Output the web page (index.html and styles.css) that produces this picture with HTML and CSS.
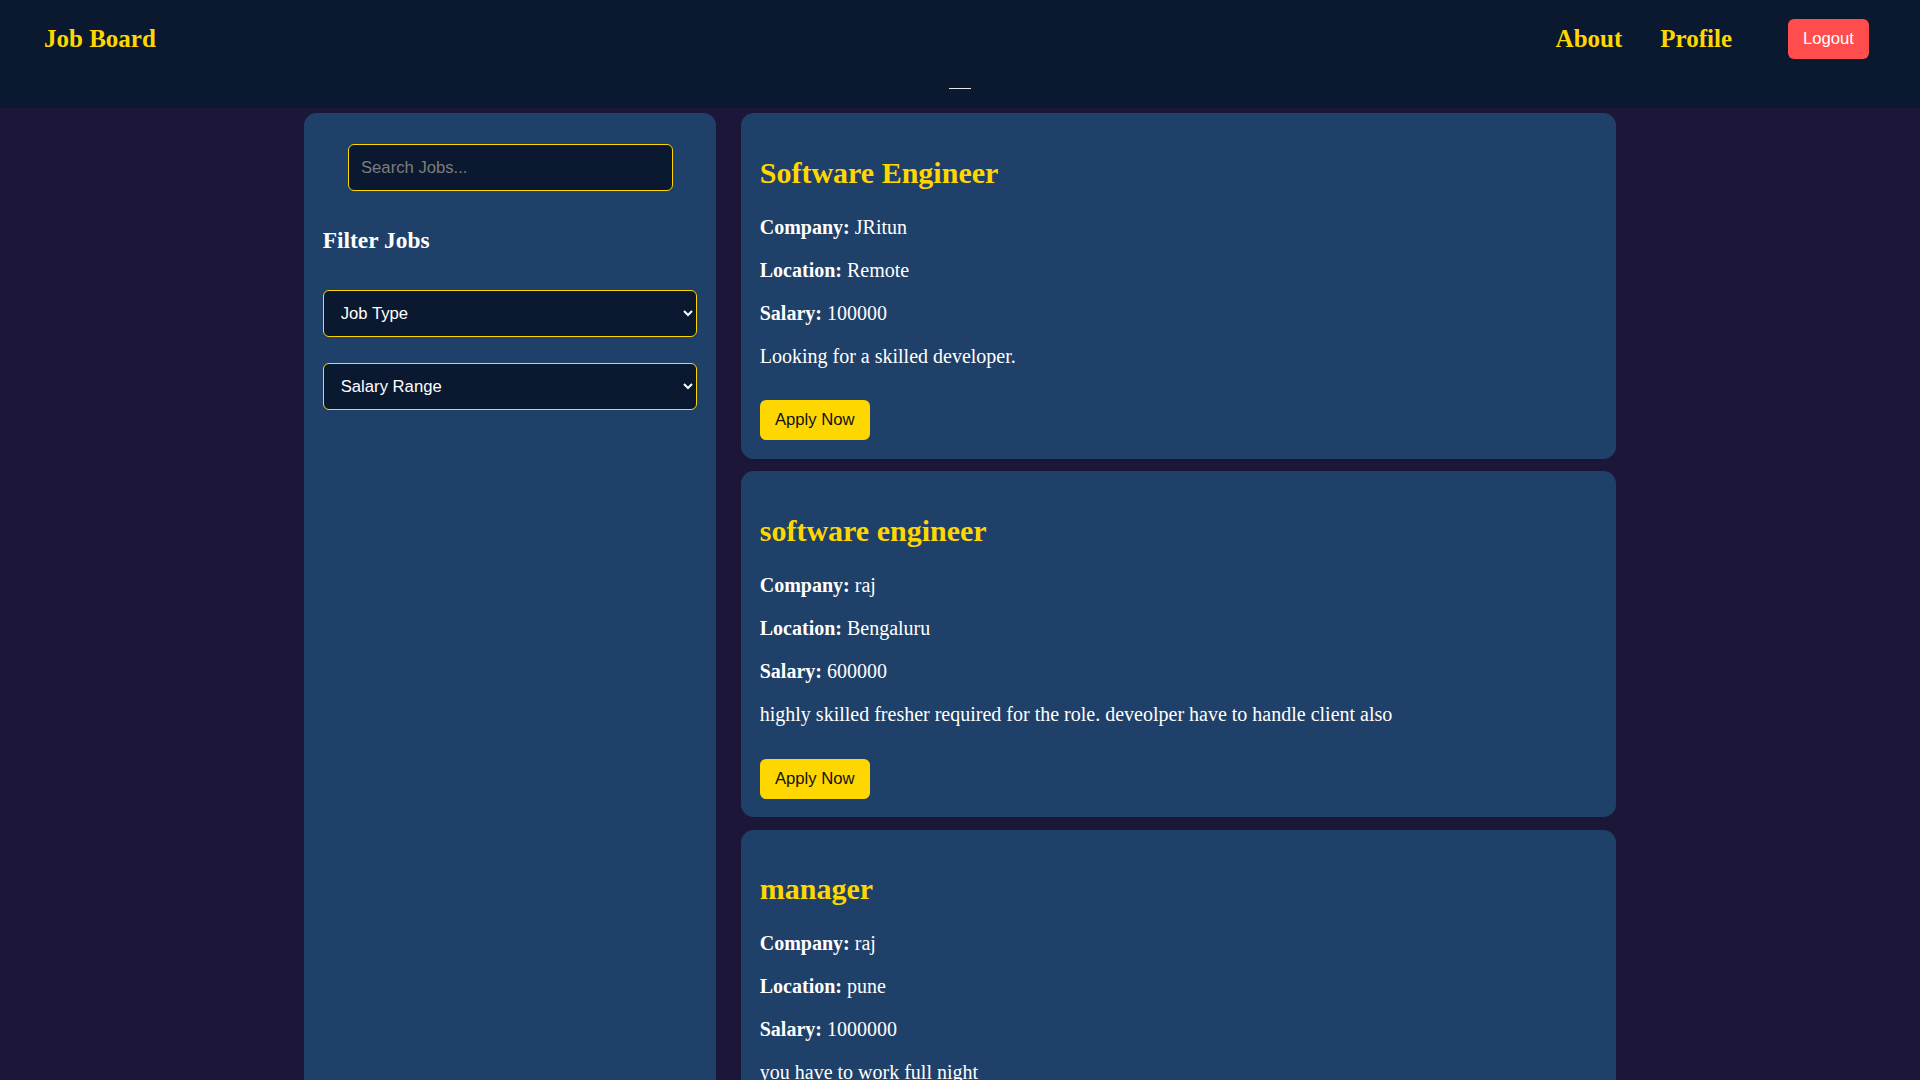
FILE: index.html
```html
<!DOCTYPE html>
<html lang="en">
<head>
<meta charset="utf-8">
<title>Job Board</title>
<link rel="stylesheet" href="styles.css">
</head>
<body>
<header class="site-header">
  <div class="header-row">
    <div class="logo">Job Board</div>
    <nav class="nav">
      <a class="nav-link" href="#">About</a>
      <a class="nav-link nav-link-last" href="#">Profile</a>
      <button class="logout-btn" type="button">Logout</button>
    </nav>
  </div>
  <div class="menu-line"></div>
</header>

<main class="layout">
  <aside class="sidebar">
    <input class="search-input" type="text" placeholder="Search Jobs...">
    <h3 class="filter-title">Filter Jobs</h3>
    <select class="filter-select">
      <option>Job Type</option>
      <option>Full-time</option>
      <option>Part-time</option>
      <option>Remote</option>
    </select>
    <select class="filter-select filter-select-second">
      <option>Salary Range</option>
      <option>0 - 500000</option>
      <option>500000 - 1000000</option>
      <option>1000000+</option>
    </select>
  </aside>

  <section class="job-list">
    <article class="job-card">
      <h2 class="job-title">Software Engineer</h2>
      <p class="job-line"><strong>Company:</strong> JRitun</p>
      <p class="job-line"><strong>Location:</strong> Remote</p>
      <p class="job-line"><strong>Salary:</strong> 100000</p>
      <p class="job-line">Looking for a skilled developer.</p>
      <div class="card-actions"><button class="apply-btn" type="button">Apply Now</button></div>
    </article>

    <article class="job-card">
      <h2 class="job-title">software engineer</h2>
      <p class="job-line"><strong>Company:</strong> raj</p>
      <p class="job-line"><strong>Location:</strong> Bengaluru</p>
      <p class="job-line"><strong>Salary:</strong> 600000</p>
      <p class="job-line">highly skilled fresher required for the role. deveolper have to handle client also</p>
      <div class="card-actions"><button class="apply-btn" type="button">Apply Now</button></div>
    </article>

    <article class="job-card">
      <h2 class="job-title">manager</h2>
      <p class="job-line"><strong>Company:</strong> raj</p>
      <p class="job-line"><strong>Location:</strong> pune</p>
      <p class="job-line"><strong>Salary:</strong> 1000000</p>
      <p class="job-line">you have to work full night</p>
      <div class="card-actions"><button class="apply-btn" type="button">Apply Now</button></div>
    </article>
  </section>
</main>
</body>
</html>
```

FILE: styles.css
```css
* {
  box-sizing: border-box;
}

html, body {
  margin: 0;
  padding: 0;
}

body {
  background: #1c1638;
  color: #ffffff;
  font-family: "Liberation Serif", "Times New Roman", serif;
  font-size: 20px;
}

.site-header {
  background: #0a192f;
  height: 108px;
  padding: 19px 51px 0 44px;
  display: flex;
  flex-direction: column;
}

.header-row {
  display: flex;
  align-items: center;
  justify-content: space-between;
  height: 40px;
}

.logo {
  color: #ffd700;
  font-weight: bold;
  font-size: 25px;
}

.nav {
  display: flex;
  align-items: center;
}

.nav-link {
  color: #ffd700;
  font-weight: bold;
  font-size: 25px;
  text-decoration: none;
  margin-left: 38px;
}

.nav-link-last {
  margin-right: 56px;
}

.logout-btn {
  background: #ff4d4d;
  color: #ffffff;
  border: none;
  border-radius: 6px;
  font-family: "Liberation Sans", Arial, sans-serif;
  font-size: 16.67px;
  height: 40px;
  width: 81px;
  padding: 0;
}

.menu-line {
  align-self: center;
  width: 22px;
  height: 1px;
  background: #e8e8e8;
  margin-top: 29px;
  margin-left: 7px;
}

.layout {
  width: 1312px;
  margin: 5px auto 0;
  display: flex;
  gap: 25px;
  align-items: stretch;
}

.sidebar {
  width: 412px;
  flex: 0 0 412px;
  background: #1f4068;
  border-radius: 12.5px;
  padding: 18.75px;
  display: flex;
  flex-direction: column;
}

.search-input {
  align-self: center;
  width: 325px;
  height: 47px;
  margin-top: 12.25px;
  padding: 0 12.5px;
  background: #0a192f;
  border: 1.5px solid #ffd700;
  border-radius: 6px;
  color: #ffffff;
  font-family: "Liberation Sans", Arial, sans-serif;
  font-size: 16.67px;
  outline: none;
}

.search-input::placeholder {
  color: #7d7d7d;
}

.filter-title {
  margin: 36px 0 0;
  font-size: 23.4px;
  font-weight: bold;
  line-height: 26.9px;
  color: #ffffff;
}

.filter-select {
  margin-top: 36.4px;
  width: 100%;
  height: 47px;
  padding: 0 8px 0 13px;
  background: #0a192f;
  color: #ffffff;
  border: 1.5px solid #ffd700;
  border-radius: 6px;
  font-family: "Liberation Sans", Arial, sans-serif;
  font-size: 16.67px;
  outline: none;
}

.filter-select-second {
  margin-top: 26px;
}

.job-list {
  flex: 1;
  min-width: 0;
}

.job-card {
  background: #1f4068;
  border-radius: 12.5px;
  padding: 18.75px;
  margin-bottom: 12.5px;
}

.job-title {
  color: #ffd700;
  font-size: 30px;
  font-weight: bold;
  line-height: 34.5px;
  margin: 23.8px 0 25.6px;
}

.job-line {
  margin: 0 0 20px;
  line-height: 23px;
}

.job-line strong {
  font-weight: bold;
}

.card-actions {
  display: flex;
  padding-top: 12.5px;
}

.apply-btn {
  background: #ffd700;
  color: #111111;
  border: none;
  border-radius: 6px;
  font-family: "Liberation Sans", Arial, sans-serif;
  font-size: 16.67px;
  height: 40px;
  width: 110px;
  padding: 0;
}
```
